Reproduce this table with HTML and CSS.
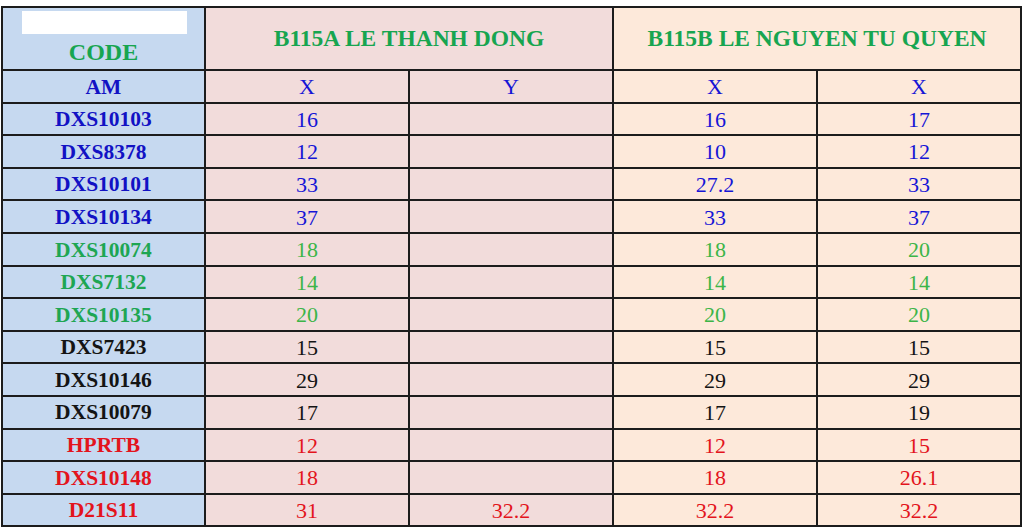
FILE: index.html
```html
<!DOCTYPE html>
<html>
<head>
<meta charset="utf-8">
<link rel="stylesheet" href="styles.css">
</head>
<body>
<div class="wrap">
<table class="sheet">
  <colgroup>
    <col class="c-code"><col class="c-val"><col class="c-val"><col class="c-val"><col class="c-val">
  </colgroup>
  <tr class="head">
    <td class="code code-head"><div class="blank"></div><div class="code-title">CODE</div></td>
    <td class="pink title" colspan="2">B115A LE THANH DONG</td>
    <td class="peach title" colspan="2">B115B LE NGUYEN TU QUYEN</td>
  </tr>
  <tr class="blue">
    <td class="code">AM</td>
    <td class="pink">X</td><td class="pink">Y</td>
    <td class="peach">X</td><td class="peach">X</td>
  </tr>
  <tr class="blue">
    <td class="code">DXS10103</td>
    <td class="pink">16</td><td class="pink"></td>
    <td class="peach">16</td><td class="peach">17</td>
  </tr>
  <tr class="blue">
    <td class="code">DXS8378</td>
    <td class="pink">12</td><td class="pink"></td>
    <td class="peach">10</td><td class="peach">12</td>
  </tr>
  <tr class="blue">
    <td class="code">DXS10101</td>
    <td class="pink">33</td><td class="pink"></td>
    <td class="peach">27.2</td><td class="peach">33</td>
  </tr>
  <tr class="blue">
    <td class="code">DXS10134</td>
    <td class="pink">37</td><td class="pink"></td>
    <td class="peach">33</td><td class="peach">37</td>
  </tr>
  <tr class="green">
    <td class="code">DXS10074</td>
    <td class="pink">18</td><td class="pink"></td>
    <td class="peach">18</td><td class="peach">20</td>
  </tr>
  <tr class="green">
    <td class="code">DXS7132</td>
    <td class="pink">14</td><td class="pink"></td>
    <td class="peach">14</td><td class="peach">14</td>
  </tr>
  <tr class="green">
    <td class="code">DXS10135</td>
    <td class="pink">20</td><td class="pink"></td>
    <td class="peach">20</td><td class="peach">20</td>
  </tr>
  <tr class="black">
    <td class="code">DXS7423</td>
    <td class="pink">15</td><td class="pink"></td>
    <td class="peach">15</td><td class="peach">15</td>
  </tr>
  <tr class="black">
    <td class="code">DXS10146</td>
    <td class="pink">29</td><td class="pink"></td>
    <td class="peach">29</td><td class="peach">29</td>
  </tr>
  <tr class="black">
    <td class="code">DXS10079</td>
    <td class="pink">17</td><td class="pink"></td>
    <td class="peach">17</td><td class="peach">19</td>
  </tr>
  <tr class="red">
    <td class="code">HPRTB</td>
    <td class="pink">12</td><td class="pink"></td>
    <td class="peach">12</td><td class="peach">15</td>
  </tr>
  <tr class="red">
    <td class="code">DXS10148</td>
    <td class="pink">18</td><td class="pink"></td>
    <td class="peach">18</td><td class="peach">26.1</td>
  </tr>
  <tr class="red">
    <td class="code">D21S11</td>
    <td class="pink">31</td><td class="pink">32.2</td>
    <td class="peach">32.2</td><td class="peach">32.2</td>
  </tr>
</table>
</div>
</body>
</html>
```
FILE: styles.css
```css
html, body {
  margin: 0;
  padding: 0;
  background: #ffffff;
}
.wrap {
  padding: 6px 0 0 1px;
}
.sheet {
  border-collapse: collapse;
  table-layout: fixed;
  width: 1019px;
  font-family: "Liberation Serif", "Times New Roman", serif;
  font-size: 22px;
  line-height: 1;
}
.c-code { width: 203px; }
.c-val { width: 204px; }
.sheet td {
  border: 2px solid #1c1c1c;
  padding: 2px 0 0 0;
  height: 28.6px;
  text-align: center;
  vertical-align: middle;
  white-space: nowrap;
}
.sheet tr.head td {
  height: 61px;
  padding: 0;
}
.code {
  background: #c6d9f0;
  font-weight: bold;
  font-size: 21.5px;
}
.pink { background: #f2dcdb; }
.peach { background: #fde9da; }
.title {
  color: #17a550;
  font-weight: bold;
  font-size: 23.5px;
}
.code-head {
  vertical-align: top !important;
}
.blank {
  width: 165px;
  height: 23px;
  background: #ffffff;
  margin: 3px 0 0 19px;
}
.code-title {
  color: #17a550;
  font-size: 24px;
  margin-top: 6px;
}
tr.blue td { color: #1515d6; }
tr.blue td.code { color: #1212c4; }
tr.green td { color: #3cb548; }
tr.green td.code { color: #1ea653; }
tr.black td { color: #141414; }
tr.red td { color: #e3141c; }
```
